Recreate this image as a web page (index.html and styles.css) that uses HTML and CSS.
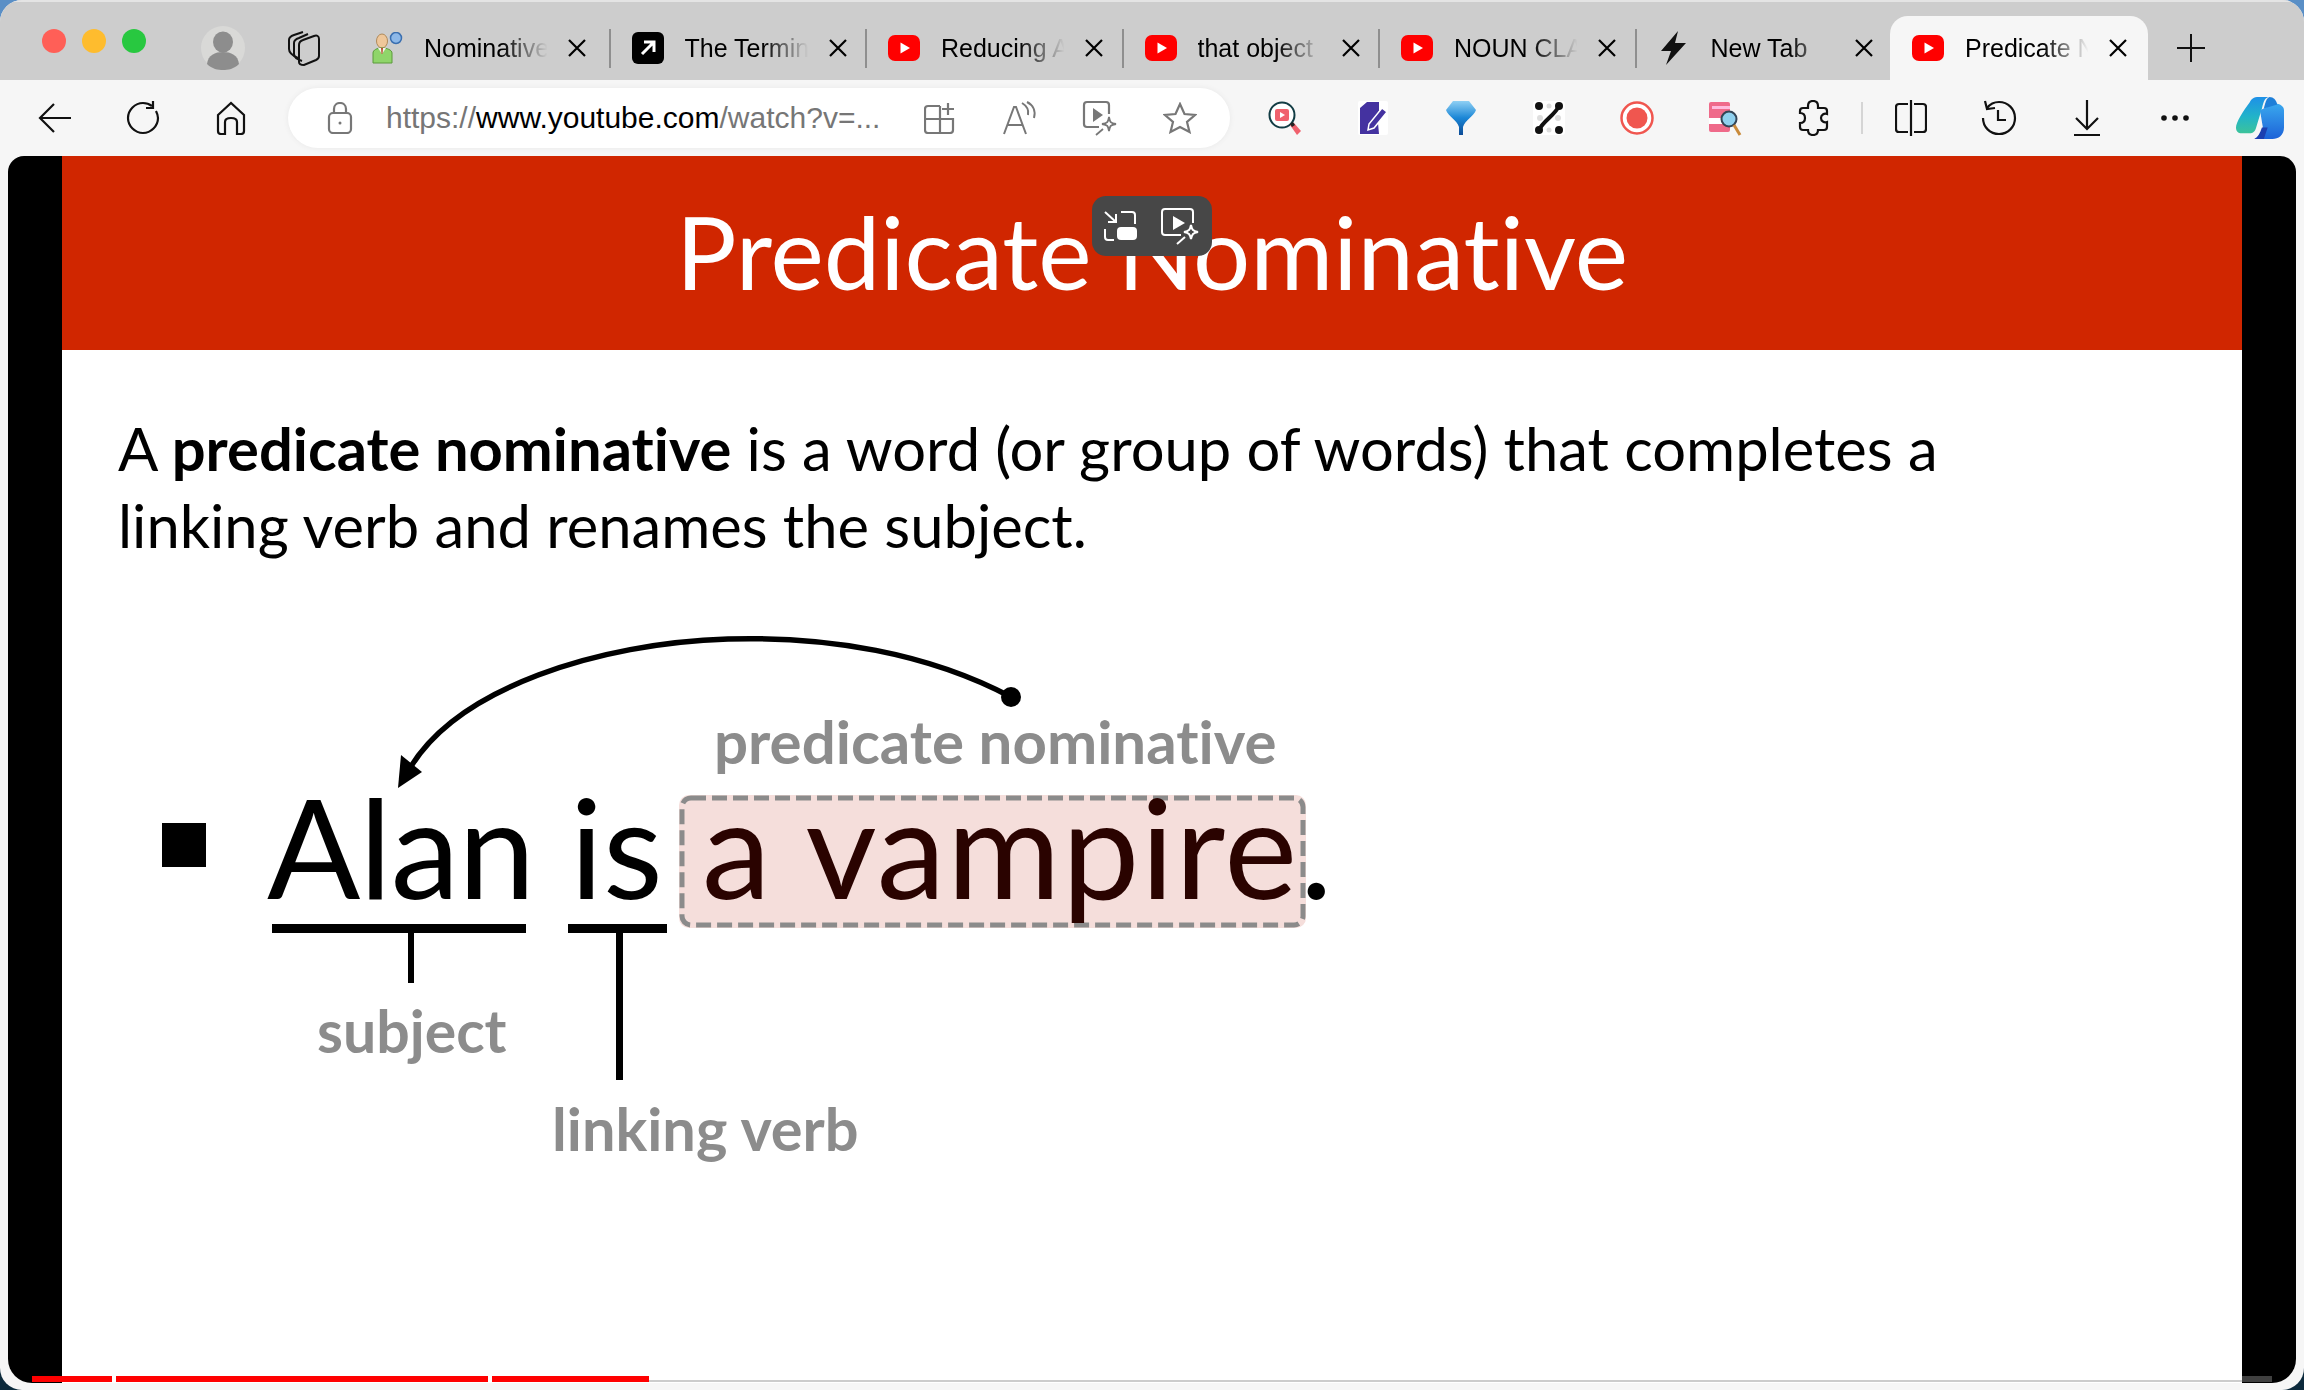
FILE: index.html
```html
<!DOCTYPE html>
<html>
<head>
    <title>Predicate Nominative</title>
    <link rel="stylesheet" href="styles.css">
</head>
<body>
    <svg class="defs" width="0" height="0">
        <symbol id="yt" viewBox="0 0 32 32">
            <rect x="0" y="3" width="32" height="26" rx="7" fill="#f00"/>
            <path d="M12.500 10.500 L22 16 L12.500 21.500 Z" fill="#fff"/>
        </symbol>
        <symbol id="x" viewBox="0 0 20 20">
            <path d="M2 2 L18 18 M18 2 L2 18" stroke="#000" stroke-width="2.200" fill="none"/>
        </symbol>
    </svg>
    <div class="window">
        <div class="tabstrip">
            <div class="lights">
                <span class="light red"></span>
                <span class="light yellow"></span>
                <span class="light green"></span>
            </div>
            <svg class="profile" width="44" height="44" viewBox="0 0 44 44">
                <circle cx="22" cy="22" r="22" fill="#d9d9d7"/>
                <ellipse cx="22" cy="16" rx="10" ry="10.500" fill="#8d8d8d"/>
                <path d="M6 38 C7 29 14 26 22 26 C30 26 37 29 38 38 C33 43 27 44 22 44 C17 44 11 43 6 38 Z" fill="#8d8d8d"/>
            </svg>
            <svg class="collections" width="36" height="36" viewBox="0 0 36 36" fill="none" stroke="#111" stroke-width="2">
                <path d="M12 28 C5 25 3 22 3 19 L3 10 C3 7 5 6 8 5 L17 2"/>
                <path d="M16 31 C10 29 8 27 8 24 L8 13 C8 10 10 9 13 8 L22 4"/>
                <path d="M13 15 C13 12 14 11 17 10 L28 6 C31 5 33 6 33 9 L33 26 C33 28 32 29 30 30 L18 35 C15 35 13 34 13 32 Z"/>
            </svg>
            <div class="tab">
                <svg class="favicon" width="32" height="32" viewBox="0 0 32 32">
                    <circle cx="25" cy="6" r="5.500" fill="#8db8e8" stroke="#3a6fb0" stroke-width="1.500"/>
                    <ellipse cx="11" cy="9" rx="5.500" ry="7" fill="#efc79a" stroke="#b08a5a"/>
                    <path d="M2 31 L2 21 C2 18 6 16 11 16 C16 16 21 18 21 21 L21 31 Z" fill="#8fd56a" stroke="#5a9a3a"/>
                    <path d="M7 16 L15 16 L11 22 Z" fill="#f4f4f4"/>
                    <path d="M10 16 L12 16 L11.500 22 L10.500 22 Z" fill="#b5502a"/>
                </svg>
                <span class="tab-title">Nominative</span>
                <svg class="tab-close" width="20" height="20"><use href="#x"/></svg>
            </div>
            <div class="tab">
                <svg class="favicon" width="32" height="32" viewBox="0 0 32 32">
                    <rect width="32" height="32" rx="6" fill="#000"/>
                    <path d="M10 22 L21 11 M12 10 L22 10 L22 20" stroke="#fff" stroke-width="3" fill="none"/>
                </svg>
                <span class="tab-title">The Termin</span>
                <svg class="tab-close" width="20" height="20"><use href="#x"/></svg>
            </div>
            <div class="tab">
                <svg class="favicon" width="32" height="32"><use href="#yt"/></svg>
                <span class="tab-title">Reducing A</span>
                <svg class="tab-close" width="20" height="20"><use href="#x"/></svg>
            </div>
            <div class="tab">
                <svg class="favicon" width="32" height="32"><use href="#yt"/></svg>
                <span class="tab-title">that object</span>
                <svg class="tab-close" width="20" height="20"><use href="#x"/></svg>
            </div>
            <div class="tab">
                <svg class="favicon" width="32" height="32"><use href="#yt"/></svg>
                <span class="tab-title">NOUN CLA</span>
                <svg class="tab-close" width="20" height="20"><use href="#x"/></svg>
            </div>
            <div class="tab no-sep">
                <svg class="favicon" width="32" height="34" viewBox="0 0 32 34">
                    <path d="M20 0 L3 20 L13 20 L8 34 L28 12 L17 12 Z" fill="#111"/>
                </svg>
                <span class="tab-title">New Tab</span>
                <svg class="tab-close" width="20" height="20"><use href="#x"/></svg>
            </div>
            <div class="tab active">
                <svg class="favicon" width="32" height="32"><use href="#yt"/></svg>
                <span class="tab-title">Predicate N</span>
                <svg class="tab-close" width="20" height="20"><use href="#x"/></svg>
            </div>
            <svg class="new-tab" width="30" height="30" viewBox="0 0 30 30">
                <path d="M15 1 L15 29 M1 15 L29 15" stroke="#111" stroke-width="2"/>
            </svg>
        </div>

        <div class="toolbar">
            <div class="tool">
                <svg width="36" height="32" viewBox="0 0 36 32" fill="none" stroke="#111" stroke-width="2.200">
                    <path d="M34 16 L3 16 M17 2 L3 16 L17 30"/>
                </svg>
            </div>
            <div class="tool">
                <svg width="36" height="36" viewBox="0 0 36 36" fill="none" stroke="#111" stroke-width="2.200">
                    <path d="M27 6 C23 3 20 3 18 3 C10 3 3 10 3 18 C3 26 10 33 18 33 C26 33 33 26 33 18 C33 15 32 13 31 11"/>
                    <path d="M28 1 L28 8 L21 8"/>
                </svg>
            </div>
            <div class="tool">
                <svg width="32" height="34" viewBox="0 0 32 34" fill="none" stroke="#111" stroke-width="2.200">
                    <path d="M3 14 L16 2 L29 14 L29 30 C29 32 28 33 26 33 L22 33 L22 21 C22 18 20 17 16 17 C12 17 10 18 10 21 L10 33 L6 33 C4 33 3 32 3 30 Z"/>
                </svg>
            </div>

            <div class="address">
                <svg class="lock" width="26" height="32" viewBox="0 0 26 32" fill="none" stroke="#777" stroke-width="2.200">
                    <rect x="2" y="11" width="22" height="20" rx="4"/>
                    <path d="M7 11 L7 7 C7 3 10 1 13 1 C16 1 19 3 19 7 L19 11"/>
                    <circle cx="13" cy="21" r="1.500" fill="#777" stroke="none"/>
                </svg>
                <div class="url"><span class="url-dim">https://</span>www.youtube.com<span class="url-dim">/watch?v=...</span></div>
                <div class="addr-action">
                    <svg width="32" height="32" viewBox="0 0 32 32" fill="none" stroke="#777" stroke-width="2.200">
                        <path d="M16 4 L4 4 C2 4 1 5 1 7 L1 28 C1 30 2 31 4 31 L26 31 C28 31 29 30 29 28 L29 17 L1 17 M16 4 L16 31"/>
                        <path d="M24 1 L24 13 M18 7 L30 7"/>
                    </svg>
                </div>
                <div class="addr-action">
                    <svg width="34" height="34" viewBox="0 0 34 34" fill="none" stroke="#777" stroke-width="2">
                        <path d="M1 33 L11 6 L13 6 L23 33 M5 24 L19 24"/>
                        <path d="M19 2 C24 5 26 9 25 14 M24 1 C30 4 33 10 31 17"/>
                    </svg>
                </div>
                <div class="addr-action">
                    <svg width="36" height="36" viewBox="0 0 36 36" fill="none" stroke="#777" stroke-width="2.200">
                        <path d="M17 27 L5 27 C3 27 2 26 2 24 L2 5 C2 3 3 2 5 2 L24 2 C26 2 27 3 27 5 L27 14"/>
                        <path d="M11 8 L21 15 L11 22 Z" fill="#777" stroke="none"/>
                        <path d="M27 17 C28 22 28 23 34 24 C28 25 28 26 27 31 C26 26 26 25 20 24 C26 23 26 22 27 17 Z" stroke-width="1.800"/>
                        <path d="M21 29 L14 35" stroke-width="1.800"/>
                    </svg>
                </div>
                <div class="addr-action">
                    <svg width="34" height="32" viewBox="0 0 34 32" fill="none" stroke="#777" stroke-width="2.200">
                        <path d="M17 2 L21.500 12 L32 13 L24 20 L26.500 30 L17 25 L7.500 30 L10 20 L2 13 L12.500 12 Z"/>
                    </svg>
                </div>
            </div>

            <div class="tool first-ext">
                <svg width="34" height="34" viewBox="0 0 34 34">
                    <circle cx="14" cy="14" r="12.500" fill="#fff" stroke="#123c44" stroke-width="2"/>
                    <rect x="7" y="8" width="14" height="12" rx="2" fill="#f0616d"/>
                    <path d="M12 11 L17 14 L12 17 Z" fill="#fff"/>
                    <path d="M22 24 L26 22 L33 30 L29 34 Z" fill="#f0616d"/>
                    <path d="M22 23 L25 21 L27 24 L24 26 Z" fill="#222"/>
                </svg>
            </div>
            <div class="tool">
                <svg width="30" height="34" viewBox="0 0 30 34">
                    <rect width="30" height="34" rx="2" fill="#fff"/>
                    <path d="M2 7 L9 1 L21 1 L21 10 L13 24 L20 22 L21 33 L2 33 Z" fill="#4432a0"/>
                    <path d="M24 7 L29 11 L16 27 L10 29 L11 23 Z" fill="#4432a0" stroke="#fff" stroke-width="1.500"/>
                </svg>
            </div>
            <div class="tool">
                <svg width="30" height="36" viewBox="0 0 30 36">
                    <defs>
                        <linearGradient id="gem" x1="0" y1="0" x2="0" y2="1">
                            <stop offset="0" stop-color="#8fd0f4"/>
                            <stop offset="0.500" stop-color="#1a86d6"/>
                            <stop offset="1" stop-color="#0d4c96"/>
                        </linearGradient>
                    </defs>
                    <path d="M7 1 L23 1 L30 10 C28 16 19 20 17 27 L17 35 L13 35 L13 27 C11 20 2 16 0 10 Z" fill="url(#gem)"/>
                </svg>
            </div>
            <div class="tool">
                <svg width="32" height="34" viewBox="0 0 32 34">
                    <rect width="32" height="34" rx="3" fill="#fff"/>
                    <circle cx="7" cy="17" r="3" fill="#ddd"/><circle cx="25" cy="17" r="3" fill="#ddd"/>
                    <circle cx="16" cy="5" r="2.500" fill="#ddd"/><circle cx="16" cy="29" r="2.500" fill="#ddd"/>
                    <circle cx="6" cy="5" r="4" fill="#111"/><circle cx="26" cy="5" r="4" fill="#111"/>
                    <circle cx="6" cy="29" r="4" fill="#111"/><circle cx="26" cy="29" r="4" fill="#111"/>
                    <path d="M26 5 C22 14 10 20 6 29" stroke="#111" stroke-width="4" fill="none"/>
                </svg>
            </div>
            <div class="tool">
                <svg width="34" height="34" viewBox="0 0 34 34">
                    <ellipse cx="17" cy="17" rx="15.500" ry="15.500" fill="#fff" stroke="#f0564f" stroke-width="2.500"/>
                    <circle cx="17" cy="17" r="10.500" fill="#f0564f"/>
                </svg>
            </div>
            <div class="tool">
                <svg width="34" height="36" viewBox="0 0 34 36">
                    <rect x="1" y="2" width="21" height="30" rx="2" fill="#ef6a8a"/>
                    <rect x="4" y="6" width="18" height="3" fill="#fbd"/>
                    <rect x="1" y="18" width="14" height="6" fill="#fff"/>
                    <circle cx="21" cy="19" r="7.500" fill="#8fd0ee" stroke="#345" stroke-width="2"/>
                    <path d="M26 25 L32 35" stroke="#c98a3a" stroke-width="3"/>
                </svg>
            </div>
            <div class="tool">
                <svg width="32" height="36" viewBox="0 0 32 36" fill="none" stroke="#111" stroke-width="2.200">
                    <path d="M11 6 C11 3 13 1 16 1 C19 1 21 3 21 6 L21 8 L27 8 C29 8 30 9 30 11 L30 14 C27 13 24 15 24 18 C24 21 27 23 30 22 L30 27 C30 29 29 30 27 30 L21 30 C21 33 19 35 16 35 C13 35 11 33 11 30 L6 30 C4 30 3 29 3 27 L3 23 C6 23 8 21 8 18 C8 15 6 13 3 13 L3 11 C3 9 4 8 6 8 L11 8 Z"/>
                </svg>
            </div>
            <span class="tool-sep"></span>
            <div class="tool">
                <svg width="32" height="36" viewBox="0 0 32 36" fill="none" stroke="#111" stroke-width="2.200">
                    <path d="M13 4 L4 4 C2 4 1 5 1 7 L1 29 C1 31 2 32 4 32 L13 32 M19 4 L28 4 C30 4 31 5 31 7 L31 29 C31 31 30 32 28 32 L19 32"/>
                    <path d="M16 0 L16 36"/>
                </svg>
            </div>
            <div class="tool">
                <svg width="36" height="36" viewBox="0 0 36 36" fill="none" stroke="#111" stroke-width="2.200">
                    <path d="M6 8 C9 4 13 2 18 2 C27 2 34 9 34 18 C34 27 27 34 18 34 C9 34 2 27 2 18"/>
                    <path d="M4 1 L6 9 L14 8"/>
                    <path d="M17 10 L17 20 L25 20"/>
                </svg>
            </div>
            <div class="tool">
                <svg width="28" height="36" viewBox="0 0 28 36" fill="none" stroke="#111" stroke-width="2.200">
                    <path d="M14 0 L14 28 M3 18 L14 29 L25 18"/>
                    <path d="M1 35 L27 35"/>
                </svg>
            </div>
            <div class="tool">
                <svg width="28" height="6" viewBox="0 0 28 6" fill="#111">
                    <circle cx="3" cy="3" r="2.800"/><circle cx="14" cy="3" r="2.800"/><circle cx="25" cy="3" r="2.800"/>
                </svg>
            </div>
            <div class="copilot">
                <svg width="48" height="44" viewBox="0 0 50 44">
                    <defs>
                        <linearGradient id="cpa" x1="0" y1="0" x2="0" y2="1">
                            <stop offset="0" stop-color="#1e90e8"/>
                            <stop offset="0.550" stop-color="#22b4c8"/>
                            <stop offset="1" stop-color="#3cc39a"/>
                        </linearGradient>
                        <linearGradient id="cpb" x1="0" y1="0" x2="0" y2="1">
                            <stop offset="0" stop-color="#3aa8ee"/>
                            <stop offset="1" stop-color="#1c62d8"/>
                        </linearGradient>
                    </defs>
                    <path d="M14 6 C16 2 18 0 24 0 L34 0 C30 1 29 4 27 12 L21 32 C20 36 18 38 14 38 L6 38 C2 38 0 36 0 32 C0 26 8 14 14 6 Z" fill="url(#cpa)"/>
                    <path d="M25 14 L40 7 C46 7 50 10 50 14 L50 32 C50 40 44 44 38 44 L20 44 C24 42 26 38 28 32 Z" fill="url(#cpb)"/>
                    <path d="M35 0 C39 0 42 3 43 8 L29 12 C31 4 32 1 35 0 Z" fill="#1f7fd8"/>
                    <path d="M19 44 C23 42 25 38 27 32 L33 32 L29 44 Z" fill="#1b3fb0"/>
                </svg>
            </div>
        </div>

        <div class="player">
            <div class="slide">
                <div class="banner">Predicate Nominative</div>
                <div class="slide-body">
                    <p class="definition">A <b>predicate nominative</b> is a word (or group of words) that completes a<br>linking verb and renames the subject.</p>
                    <div class="diagram">
                        <svg class="arrow" width="700" height="240" viewBox="0 0 700 240" fill="none">
                            <path d="M623 69 C540 25 440 8 340 11 C210 15 70 60 22 140" stroke="#000" stroke-width="5.500"/>
                            <path d="M10 160 L13 127 L34 144 Z" fill="#000"/>
                            <circle cx="623" cy="69" r="10" fill="#000"/>
                        </svg>
                        <div class="bullet"></div>
                        <div class="label label-pn">predicate nominative</div>
                        <div class="highlight">
                            <svg width="627" height="133" viewBox="0 0 627 133" fill="none">
                                <rect x="3" y="3" width="621" height="127" rx="9" stroke="#8b8b8b" stroke-width="5" stroke-dasharray="15 6"/>
                            </svg>
                        </div>
                        <div class="word word-alan">Alan</div>
                        <div class="word word-is">is</div>
                        <div class="word word-vampire">a vampire</div>
                        <div class="word word-dot">.</div>
                        <div class="rule rule-alan"></div>
                        <div class="rule rule-is"></div>
                        <div class="stem stem-alan"></div>
                        <div class="stem stem-is"></div>
                        <div class="label label-subject">subject</div>
                        <div class="label label-verb">linking verb</div>
                    </div>
                </div>
            </div>

            <div class="pip-bar">
                <svg width="36" height="32" viewBox="0 0 36 32" fill="none" stroke="#fff" stroke-width="2">
                    <path d="M2 2 L13 12 M13 4 L13 12 L5 12"/>
                    <path d="M18 2 L29 2 C31 2 32 3 32 5 L32 14 M2 19 L2 27 C2 29 3 30 5 30 L11 30"/>
                    <rect x="14" y="17" width="20" height="13" rx="4" fill="#fff" stroke="none"/>
                </svg>
                <svg width="40" height="38" viewBox="0 0 40 38" fill="none" stroke="#fff" stroke-width="2">
                    <path d="M20 28 L4 28 C2 28 1 27 1 25 L1 5 C1 3 2 2 4 2 L29 2 C31 2 32 3 32 5 L32 16"/>
                    <path d="M12 9 L24 16 L12 23 Z" fill="#fff" stroke="none"/>
                    <path d="M30 18 C31 23 32 24 37 25 C32 26 31 27 30 32 C29 27 28 26 23 25 C28 24 29 23 30 18 Z"/>
                    <path d="M24 30 L16 37"/>
                </svg>
            </div>

            <div class="progress">
                <span class="seg seg-a"></span>
                <span class="seg seg-b"></span>
                <span class="seg seg-c"></span>
                <span class="rest"></span>
                <span class="rest-dark"></span>
            </div>
        </div>
    </div>
</body>
</html>
```

FILE: styles.css
```css
html {
    background: linear-gradient(#5a8fc6 0, #5a8fc6 40px, #0c2a3c 1350px);
}
body {
    margin: 0;
    width: 2304px;
    height: 1390px;
    overflow: hidden;
    font-family: "Liberation Sans", Arial, sans-serif;
    color: #000;
}
.defs {
    display: none;
}
.window {
    width: 2304px;
    height: 1390px;
    background-color: #f6f6f6;
    border-radius: 22px;
    overflow: hidden;
    display: flex;
    flex-direction: column;
}

/* tabs */
.tabstrip {
    height: 80px;
    padding-top: 16px;
    box-sizing: border-box;
    background-color: #cdcdcd;
    display: flex;
    align-items: center;
    flex-shrink: 0;
    box-shadow: inset 0 2px 0 #e4e4e4;
}
.lights {
    display: flex;
    gap: 16px;
    margin-left: 42px;
    margin-top: -14px;
}
.light {
    width: 24px;
    height: 24px;
    border-radius: 50%;
}
.light.red {
    background-color: #ff5f57;
}
.light.yellow {
    background-color: #febc2e;
}
.light.green {
    background-color: #28c840;
}
.profile {
    margin-left: 55px;
}
.collections {
    margin-left: 41px;
}
.tab {
    width: 256.500px;
    height: 39px;
    box-sizing: border-box;
    padding-left: 21px;
    border-right: 2px solid #8f8f8f;
    display: flex;
    align-items: center;
    flex-shrink: 0;
}
.collections + .tab {
    width: 256.500px;
    margin-left: 32px;
    padding-left: 17px;
}
.tab.no-sep {
    border-right: 0;
    width: 253.500px;
}
.favicon {
    flex-shrink: 0;
}
.tab-title {
    width: 130px;
    margin-left: 21px;
    font-size: 25px;
    white-space: nowrap;
    overflow: hidden;
    -webkit-mask-image: linear-gradient(to right, #000 60%, transparent 95%);
    mask-image: linear-gradient(to right, #000 60%, transparent 95%);
}
.tab-close {
    margin-left: 13px;
    flex-shrink: 0;
}
.tab.active {
    width: 258px;
    height: 64px;
    border-right: 0;
    background-color: #f6f6f6;
    border-radius: 18px 18px 0 0;
    padding-left: 22px;
}
.new-tab {
    margin-left: 28px;
}

/* toolbar */
.toolbar {
    height: 76px;
    padding-left: 11px;
    display: flex;
    align-items: center;
    flex-shrink: 0;
}
.tool {
    width: 88px;
    display: flex;
    justify-content: center;
    align-items: center;
    flex-shrink: 0;
}
.address {
    width: 942px;
    height: 60px;
    margin-left: 13px;
    padding-right: 10px;
    box-sizing: border-box;
    background-color: #fff;
    border-radius: 30px;
    box-shadow: 0 0 6px rgba(0,0,0,0.06);
    display: flex;
    align-items: center;
    flex-shrink: 0;
}
.lock {
    margin-left: 39px;
    flex-shrink: 0;
}
.url {
    flex: 1;
    margin-left: 33px;
    font-size: 30px;
    white-space: nowrap;
    overflow: hidden;
}
.url-dim {
    color: #767676;
}
.addr-action {
    width: 80px;
    display: flex;
    justify-content: center;
    flex-shrink: 0;
}
.first-ext {
    margin-left: 11px;
}
.tool-sep {
    width: 2px;
    height: 32px;
    margin: 0 4px;
    background-color: #d5d5d5;
    flex-shrink: 0;
}
.copilot {
    width: 82px;
    display: flex;
    justify-content: center;
}

/* video area */
.player {
    position: relative;
    height: 1227px;
    margin: 0 8px;
    background-color: #000;
    border-radius: 16px 16px 24px 24px;
    overflow: hidden;
    flex-shrink: 0;
}
.slide {
    width: 2180px;
    height: 100%;
    margin-left: 54px;
    background-color: #fff;
    font-family: Lato, "Open Sans", sans-serif;
    font-variant-ligatures: none;
    filter: blur(0.6px);
}
.banner {
    height: 194px;
    padding-top: 2px;
    box-sizing: border-box;
    background-color: #d02600;
    color: #fff;
    font-size: 101px;
    line-height: 186px;
    text-align: center;
}
.slide-body {
    padding: 60px 0 0 56px;
}
.definition {
    margin: 0;
    font-size: 59.700px;
    line-height: 77px;
}
.diagram {
    position: relative;
    height: 640px;
    margin: 4px 0 0 -56px;
}
.arrow {
    position: absolute;
    left: 326px;
    top: 60px;
    z-index: 1;
}
.bullet {
    position: absolute;
    left: 100px;
    top: 255px;
    width: 44px;
    height: 44px;
    background-color: #000;
}
.label {
    position: absolute;
    color: #8c8c8c;
    font-weight: 700;
    font-size: 59px;
    line-height: 70px;
    white-space: nowrap;
}
.label-pn {
    left: 652px;
    top: 138px;
    font-size: 60px;
}
.label-subject {
    left: 255px;
    top: 428px;
}
.label-verb {
    left: 490px;
    top: 525px;
    font-size: 59.500px;
}
.highlight {
    position: absolute;
    left: 617px;
    top: 227px;
    width: 627px;
    height: 133px;
    background-color: #f5dedb;
    border-radius: 10px;
}
.highlight svg {
    display: block;
}
.word {
    position: absolute;
    top: 209px;
    font-size: 138px;
    line-height: 138px;
    white-space: nowrap;
}
.word-alan {
    left: 205px;
    letter-spacing: -1px;
}
.word-is {
    left: 508px;
}
.word-vampire {
    left: 640px;
    color: #2a0300;
    letter-spacing: 1.500px;
}
.word-dot {
    left: 1238px;
}
.rule {
    position: absolute;
    top: 356px;
    height: 9px;
    background-color: #000;
}
.rule-alan {
    left: 210px;
    width: 254px;
}
.rule-is {
    left: 506px;
    width: 99px;
}
.stem {
    position: absolute;
    top: 365px;
    background-color: #000;
}
.stem-alan {
    left: 346px;
    width: 6px;
    height: 50px;
}
.stem-is {
    left: 554px;
    width: 7px;
    height: 147px;
}
.pip-bar {
    position: absolute;
    left: 1084px;
    top: 40px;
    width: 120px;
    height: 60px;
    background-color: #474747;
    border-radius: 14px;
    display: flex;
    justify-content: center;
    align-items: center;
    gap: 22px;
}
.progress {
    position: absolute;
    left: 24px;
    right: 24px;
    bottom: 1px;
    height: 6px;
    display: flex;
}
.seg {
    height: 6px;
    margin-right: 4px;
    background-color: #f00;
}
.seg-a {
    width: 80px;
}
.seg-b {
    width: 372px;
}
.seg-c {
    width: 157px;
    margin-right: 0;
}
.rest {
    flex: 1;
    margin-top: 4px;
    background-color: #ccc;
}
.rest-dark {
    width: 30px;
    background-color: #404040;
}
```
